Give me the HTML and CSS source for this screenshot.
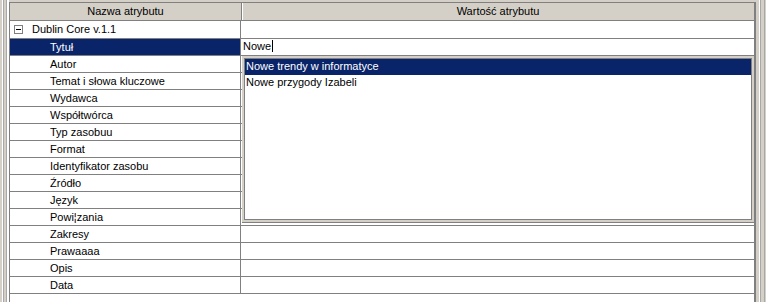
FILE: index.html
```html
<!DOCTYPE html>
<html lang="pl">
<head>
    <meta charset="UTF-8">
    <title>Atrybuty Dublin Core</title>
    <link rel="stylesheet" href="styles.css">
</head>
<body>

<div class="frame">
    <div class="grid">
        <div class="head">
            <div class="hcell name">Nazwa atrybutu</div>
            <div class="hcell value">Wartość atrybutu</div>
        </div>

        <div class="row group">
            <div class="cell name"><span class="toggle"></span>Dublin Core v.1.1</div>
            <div class="cell value"></div>
        </div>
        <div class="row selected">
            <div class="cell name attr">Tytuł</div>
            <div class="cell value edit">Nowe<span class="caret"></span></div>
        </div>
        <div class="row"><div class="cell name attr">Autor</div><div class="cell value"></div></div>
        <div class="row"><div class="cell name attr">Temat i słowa kluczowe</div><div class="cell value"></div></div>
        <div class="row"><div class="cell name attr">Wydawca</div><div class="cell value"></div></div>
        <div class="row"><div class="cell name attr">Współtwórca</div><div class="cell value"></div></div>
        <div class="row"><div class="cell name attr">Typ zasobuu</div><div class="cell value"></div></div>
        <div class="row"><div class="cell name attr">Format</div><div class="cell value"></div></div>
        <div class="row"><div class="cell name attr">Identyfikator zasobu</div><div class="cell value"></div></div>
        <div class="row"><div class="cell name attr">Źródło</div><div class="cell value"></div></div>
        <div class="row"><div class="cell name attr">Język</div><div class="cell value"></div></div>
        <div class="row"><div class="cell name attr">Powi¦zania</div><div class="cell value"></div></div>
        <div class="row"><div class="cell name attr">Zakresy</div><div class="cell value"></div></div>
        <div class="row"><div class="cell name attr">Prawaaaa</div><div class="cell value"></div></div>
        <div class="row"><div class="cell name attr">Opis</div><div class="cell value"></div></div>
        <div class="row"><div class="cell name attr">Data</div><div class="cell value"></div></div>

        <!-- podpowiedzi dla pola Tytuł -->
        <div class="popup">
            <div class="list">
                <div class="item active">Nowe trendy w informatyce</div>
                <div class="item">Nowe przygody Izabeli</div>
            </div>
        </div>
    </div>
</div>

</body>
</html>
```

FILE: styles.css
```css
body {
    margin: 0;
    height: 302px;
    overflow: hidden;
    font-family: "Liberation Sans", Arial, sans-serif;
    font-size: 11px;
    color: #000;
    background:
        linear-gradient(90deg,
            #d4d0c8 0, #d4d0c8 2px,
            #ffffff 2px, #ffffff 3px,
            #a8a8a8 3px, #a8a8a8 4px,
            #d4d0c8 4px, #d4d0c8 6px,
            #a8a8a8 6px, #a8a8a8 7px,
            #ffffff 7px, #ffffff 9px,
            transparent 9px),
        linear-gradient(270deg,
            #d4d0c8 0, #d4d0c8 1px,
            #a8a8a8 1px, #a8a8a8 2px,
            #d4d0c8 2px, #d4d0c8 5px,
            #a8a8a8 5px, #a8a8a8 6px,
            #ffffff 6px, #ffffff 7px,
            #d4d0c8 7px, #d4d0c8 10px,
            transparent 10px),
        #d4d0c8;
}

.frame {
    padding: 2px 10px 0 9px;
    height: 300px;
}

.grid {
    position: relative;
    height: 100%;
    background: #fff;
    border-top: 1px solid #808080;
    border-left: 1px solid #808080;
    border-right: 2px solid #808080;
    box-sizing: border-box;
}

.head {
    display: flex;
    height: 17px;
    background: #d4d0c8;
    border-bottom: 1px solid #808080;
}
.hcell {
    line-height: 16px;
    text-align: center;
}
.hcell.name {
    width: 231px;
    border-right: 1px solid #808080;
}
.hcell.value {
    flex: 1;
    border-left: 1px solid #fff;
    margin-right: 1px;
}

.row {
    display: flex;
    height: 16px;
    border-bottom: 1px solid #808080;
}
.row.group {
    height: 17px;
}
.cell {
    line-height: 15px;
    white-space: nowrap;
}
.row.group .cell {
    line-height: 17px;
}
.cell.name {
    width: 231px;
    padding-left: 20px;
    border-right: 1px solid #808080;
    box-sizing: border-box;
    display: flex;
    align-items: center;
}
.cell.attr {
    padding-left: 40px;
}
.cell.value {
    flex: 1;
    padding-left: 2px;
}

.toggle {
    position: relative;
    width: 7px;
    height: 7px;
    margin-left: -16px;
    margin-right: 9px;
    border: 1px solid #808080;
    background: #fff;
}
.toggle::after {
    content: "";
    position: absolute;
    left: 1px;
    top: 3px;
    width: 5px;
    height: 1px;
    background: #000;
}

.row.selected .cell.name {
    background: #0a246a;
    color: #fff;
}

.caret {
    display: inline-block;
    width: 1px;
    height: 12px;
    margin-left: 1px;
    background: #000;
    vertical-align: -2px;
}

.popup {
    position: absolute;
    left: 232px;
    top: 53px;
    width: 512px;
    height: 167px;
    padding: 2px;
    background: #d4d0c8;
    border-bottom: 1px solid #808080;
    box-sizing: border-box;
    display: flex;
}
.list {
    flex: 1;
    background: #fff;
    border: 1px solid #808080;
}
.item {
    height: 16px;
    line-height: 15px;
    padding-left: 1px;
    white-space: nowrap;
}
.item.active {
    background: #0a246a;
    color: #fff;
}
```
